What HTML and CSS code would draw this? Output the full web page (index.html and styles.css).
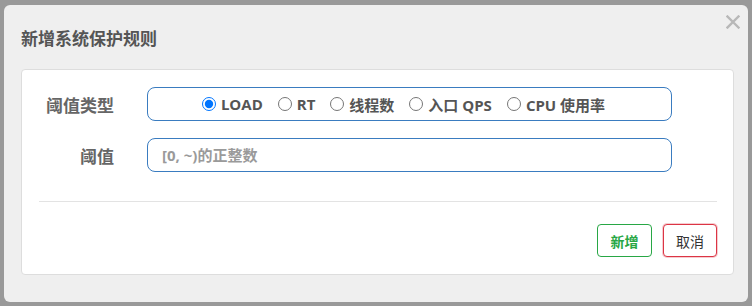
FILE: index.html
```html
<!DOCTYPE html>
<html lang="zh-CN">

<head>
  <meta charset="UTF-8">
  <meta name="viewport" content="width=device-width, initial-scale=1.0">
  <title>新增系统保护规则</title>
  <link rel="stylesheet" href="styles.css">
</head>

<body>
  <div class="modal">
    <div class="modal-header">
      <h4 class="modal-title">新增系统保护规则</h4>
      <button class="close" type="button" aria-label="关闭">
        <svg width="14" height="14" viewBox="0 0 14 14">
          <path d="M1.5 1.5 L12.5 12.5 M12.5 1.5 L1.5 12.5" stroke="#b8b8b8" stroke-width="2.4" stroke-linecap="square" />
        </svg>
      </button>
    </div>
    <div class="panel">
      <form class="rule-form">
        <div class="form-row">
          <label class="form-label">阈值类型</label>
          <div class="radio-box">
            <label class="radio"><input type="radio" name="mode" checked> LOAD</label>
            <label class="radio"><input type="radio" name="mode"> RT</label>
            <label class="radio"><input type="radio" name="mode"> 线程数</label>
            <label class="radio"><input type="radio" name="mode"> 入口 QPS</label>
            <label class="radio"><input type="radio" name="mode"> CPU 使用率</label>
          </div>
        </div>
        <div class="form-row">
          <label class="form-label" for="threshold">阈值</label>
          <input class="text-input" type="text" id="threshold" placeholder="[0, ~)的正整数">
        </div>
      </form>
      <div class="divider"></div>
      <div class="actions">
        <button class="btn btn-add" type="button">新增</button>
        <button class="btn btn-cancel" type="button">取消</button>
      </div>
    </div>
  </div>
</body>

</html>
```

FILE: styles.css
```css
* {
  box-sizing: border-box;
  margin: 0;
  padding: 0;
}

body {
  font-family: "Open Sans", "Noto Sans CJK SC", sans-serif;
  background-color: #999;
  height: 306px;
  padding: 5px 4px 4px 4px;
  overflow: hidden;
}

.modal {
  height: 297px;
  background-color: #efefef;
  border-radius: 6px;
  padding: 0 14px 0 17px;
}

.modal-header {
  position: relative;
  height: 64px;
  display: flex;
  align-items: center;
}

.modal-title {
  font-size: 17px;
  font-weight: bold;
  color: #555;
  margin-top: 1px;
}

.close {
  position: absolute;
  top: 10px;
  right: -6px;
  width: 14px;
  height: 14px;
  border: none;
  background: none;
  display: flex;
}

.panel {
  background-color: #fff;
  border: 1px solid #ddd;
  border-radius: 4px;
  height: 206px;
  padding: 17px 16px 0 0;
}

.rule-form {
  display: flex;
  flex-direction: column;
  gap: 17px;
}

.form-row {
  display: flex;
  align-items: center;
  gap: 33px;
}

.form-label {
  width: 92px;
  text-align: right;
  font-size: 17px;
  font-weight: bold;
  color: #666;
}

.radio-box,
.text-input {
  width: 525px;
  height: 34px;
  border: 1px solid #3a7cc0;
  border-radius: 8px;
}

.radio-box {
  display: flex;
  align-items: center;
  justify-content: center;
  gap: 15px;
  padding-right: 12px;
}

.radio {
  display: flex;
  align-items: center;
  gap: 5px;
  font-size: 15px;
  font-weight: bold;
  color: #555;
}

.radio input {
  width: 14px;
  height: 14px;
  margin: 0;
}

.text-input {
  font-family: inherit;
  font-size: 15px;
  font-weight: bold;
  padding: 0 14px;
  outline: none;
}

.text-input::placeholder {
  color: #9a9a9a;
}

.divider {
  height: 1px;
  background-color: #e3e3e3;
  margin: 29px 0 0 17px;
}

.actions {
  display: flex;
  justify-content: flex-end;
  gap: 11px;
  margin-top: 22px;
}

.btn {
  font-family: inherit;
  font-size: 14px;
  font-weight: bold;
  height: 33px;
  width: 55px;
  background-color: #fff;
  border-radius: 4px;
  cursor: pointer;
}

.btn-add {
  border: 1px solid #28a745;
  color: #28a745;
}

.btn-cancel {
  width: 54px;
  border: 1px solid #dc3545;
  color: #333;
  font-weight: normal;
  box-shadow: 0 0 0 1px rgba(220, 53, 69, 0.25);
}
```
